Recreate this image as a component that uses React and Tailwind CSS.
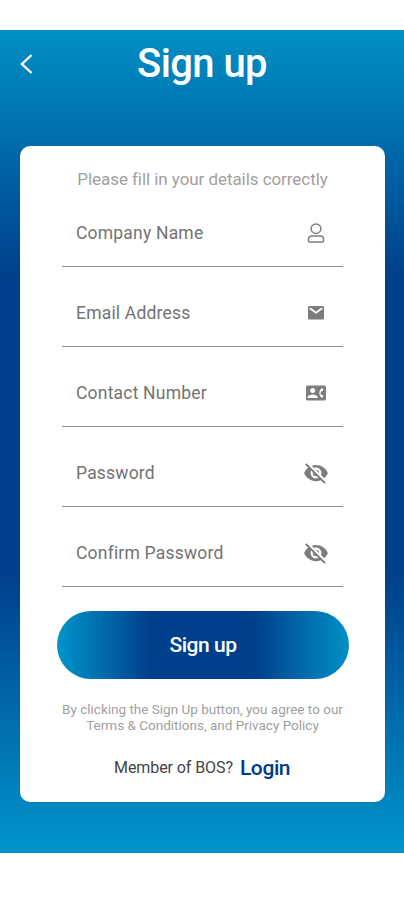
import { MdContactPhone, MdVisibilityOff } from 'react-icons/md';

function PersonIcon() {
  return (
    <svg width="18" height="20" viewBox="0 0 18 20" fill="none" stroke="#7d7d7d" strokeWidth="1.5">
      <circle cx="9" cy="5.7" r="4.8" />
      <path d="M4.500 13h9c1.900 0 3.100 1.500 3.100 3.700v1.100c0 .7-.5 1.200-1.200 1.200H2.600c-.7 0-1.200-.5-1.200-1.200v-1.100c0-2.200 1.200-3.700 3.100-3.700z" />
    </svg>
  );
}

function MailIcon() {
  return (
    <svg width="16" height="14" viewBox="0 0 16 14" fill="none">
      <rect width="16" height="13.500" rx="1.200" fill="#7d7d7d" />
      <path d="M1.800 2.200L8 6.800l6.200-4.600" stroke="#fff" strokeWidth="1.700" />
    </svg>
  );
}

const fields = [
  { label: 'Company Name', icon: <PersonIcon /> },
  { label: 'Email Address', icon: <MailIcon /> },
  { label: 'Contact Number', icon: <MdContactPhone size={20} /> },
  { label: 'Password', icon: <MdVisibilityOff size={26} /> },
  { label: 'Confirm Password', icon: <MdVisibilityOff size={26} /> },
];

export default function App() {
  return (
    <div className="h-[900px] w-[404px] overflow-hidden bg-white pt-[30px] font-['Roboto',sans-serif]">
      <div className="h-[823px] bg-[linear-gradient(180deg,#0090c5_0%,#003f8b_30%,#003f8b_66%,#0095ca_100%)]">
        <header className="grid h-[116px] grid-cols-[52px_1fr_52px] items-start">
          <svg className="mt-[24px] ml-[20px]" width="13" height="20" viewBox="0 0 13 20" fill="none" stroke="#fff" strokeWidth="2.4">
            <path d="M11.500 1L2 10l9.500 9" />
          </svg>
          <h1 className="mt-[10px] text-center text-[40px] leading-[48px] font-medium tracking-[-0.6px] whitespace-nowrap text-white">Sign up</h1>
        </header>
        <main className="ml-[20px] flex h-[656px] w-[365px] flex-col rounded-[10px] bg-white">
          <p className="mt-[22px] text-center text-[17px] leading-[22px] tracking-[-0.06px] text-[#a0a0a0]">Please fill in your details correctly</p>
          <div className="mt-[-3px] ml-[42px] w-[281px]">
            {fields.map((f) => (
              <div key={f.label} className="flex h-[80px] flex-col justify-end border-b border-[#939393] pb-[22px]">
                <div className="flex h-[22px] items-center justify-between pl-[14px]">
                  <span className="text-[17.5px] leading-[22px] tracking-[0.2px] text-[#737373]">{f.label}</span>
                  <span className="flex w-[54px] justify-center text-[#7d7d7d]">{f.icon}</span>
                </div>
              </div>
            ))}
          </div>
          <button className="mt-[24px] ml-[37px] h-[68px] w-[292px] shrink-0 rounded-full bg-[linear-gradient(90deg,#0095ca_0%,#003f8b_32%,#003f8b_67%,#0090c5_100%)] pt-[1px] text-[21px] font-medium tracking-[-0.45px] text-white">Sign up</button>
          <p className="mt-[22px] text-center text-[13.5px] leading-[16px] text-[#a0a0a0]">
            By clicking the Sign Up button, you agree to our<br />Terms &amp; Conditions, and Privacy Policy
          </p>
          <div className="mt-[21px] ml-[94px] flex h-[28px] items-center gap-[7px] leading-[28px] whitespace-nowrap">
            <span className="text-[16px] tracking-[-0.08px] text-[#444]">Member of BOS?</span>
            <a className="text-[21px] font-medium tracking-[-0.4px] text-[#003a8c]">Login</a>
          </div>
        </main>
      </div>
    </div>
  );
}
